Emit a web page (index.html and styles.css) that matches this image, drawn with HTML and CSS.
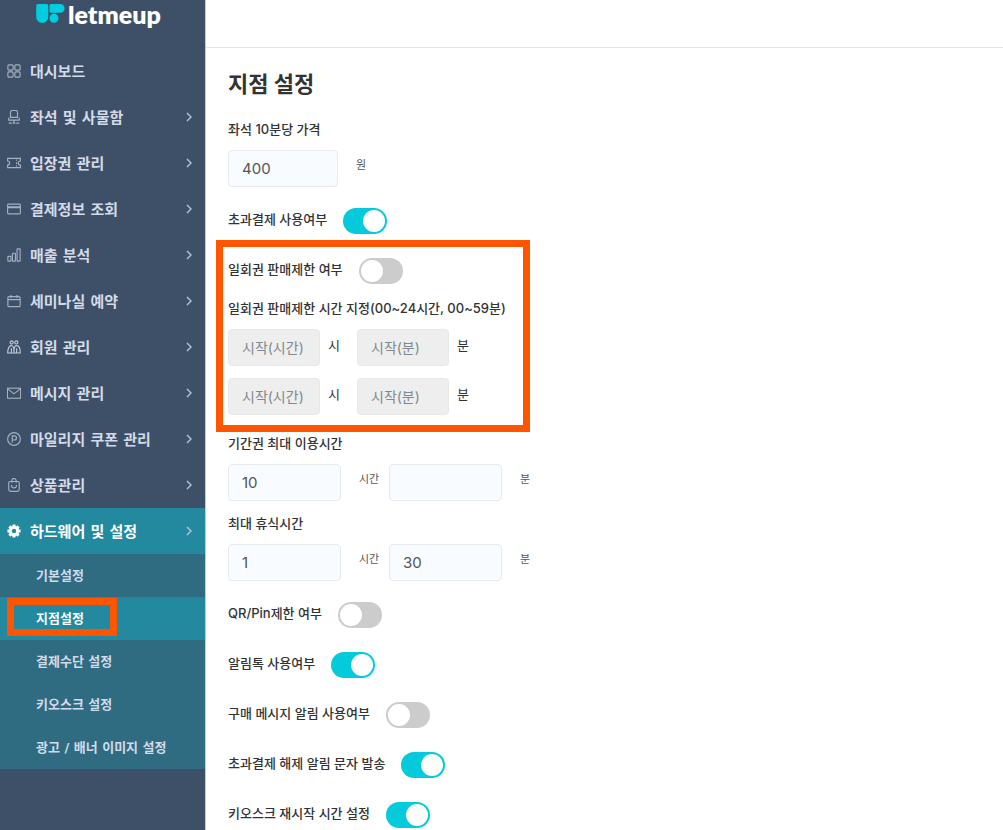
FILE: index.html
```html
<!DOCTYPE html>
<html lang="ko">
<head>
  <meta charset="UTF-8">
  <title>지점 설정</title>
  <link rel="stylesheet" href="styles.css">
</head>
<body>

<aside class="sidebar">
  <a class="logo" href="#">
    <svg width="29" height="20" viewBox="0 0 29 20" fill="#00cde0">
      <path d="M2 0h8.500a1.800 1.800 0 0 1 1.800 1.800V13a6 6 0 0 1-12.100 0V1.800A1.800 1.800 0 0 1 2 0z"/>
      <path d="M15 0h9.200a4.400 4.400 0 0 1 0 8.800H15a1.500 1.500 0 0 1-1.500-1.500V1.500A1.500 1.500 0 0 1 15 0z"/>
      <circle cx="18" cy="14.300" r="4.500"/>
    </svg>
    <span>letmeup</span>
  </a>

  <nav>
    <a class="menu" href="#">
      <svg class="icon" viewBox="0 0 16 16"><rect x="1" y="1" width="6" height="6" rx="1.200"/><rect x="9" y="1" width="6" height="6" rx="1.200"/><rect x="1" y="9" width="6" height="6" rx="1.200"/><rect x="9" y="9" width="6" height="6" rx="1.200"/></svg>
      대시보드
    </a>
    <a class="menu" href="#">
      <svg class="icon" viewBox="0 0 16 16"><path d="M4 8.500V2.500a2 2 0 0 1 2-2h4a2 2 0 0 1 2 2v6zM2 8.500v3h12v-3M2 11.500h12M8 11.500v3M2 15h3.500M6.500 15h3M10.500 15H14"/></svg>
      좌석 및 사물함
      <svg class="arrow" viewBox="0 0 8 10"><path d="M2 1l4 4-4 4"/></svg>
    </a>
    <a class="menu" href="#">
      <svg class="icon" viewBox="0 0 16 16"><path d="M.700 2.700h14.600v3a2.300 2.300 0 0 0 0 4.600v3H.700v-3a2.300 2.300 0 0 0 0-4.600zM11 4v1.500M11 7v2M11 10.500V12"/></svg>
      입장권 관리
      <svg class="arrow" viewBox="0 0 8 10"><path d="M2 1l4 4-4 4"/></svg>
    </a>
    <a class="menu" href="#">
      <svg class="icon" viewBox="0 0 16 16"><rect x=".700" y="2.500" width="14.600" height="11" rx="1"/><path d="M1 5.500h14M1 6.500h14"/></svg>
      결제정보 조회
      <svg class="arrow" viewBox="0 0 8 10"><path d="M2 1l4 4-4 4"/></svg>
    </a>
    <a class="menu" href="#">
      <svg class="icon" viewBox="0 0 16 16"><rect x="1" y="9.500" width="3.500" height="5.500" rx=".500"/><rect x="6.200" y="6" width="3.500" height="9" rx=".500"/><rect x="11.500" y="1" width="3.500" height="14" rx=".500"/></svg>
      매출 분석
      <svg class="arrow" viewBox="0 0 8 10"><path d="M2 1l4 4-4 4"/></svg>
    </a>
    <a class="menu" href="#">
      <svg class="icon" viewBox="0 0 16 16"><rect x="1" y="3" width="14" height="11.500" rx="1.500"/><path d="M1 6.500h14M4.500 1v3.500M11.500 1v3.500"/></svg>
      세미나실 예약
      <svg class="arrow" viewBox="0 0 8 10"><path d="M2 1l4 4-4 4"/></svg>
    </a>
    <a class="menu" href="#">
      <svg class="icon bright" viewBox="0 0 16 16"><circle cx="5.300" cy="2.800" r="1.800"/><circle cx="10.700" cy="2.800" r="1.800"/><path d="M.800 14.800c0-5 1.500-8.300 4.200-8.300s3 3 3 8.300c0-5.300.300-8.300 3-8.300s4.200 3.300 4.200 8.300zM5 9.500v5M11 9.500v5"/></svg>
      회원 관리
      <svg class="arrow" viewBox="0 0 8 10"><path d="M2 1l4 4-4 4"/></svg>
    </a>
    <a class="menu" href="#">
      <svg class="icon" viewBox="0 0 16 16"><rect x=".500" y="2.500" width="15" height="11.500"/><path d="M.500 3L8 9l7.500-6"/></svg>
      메시지 관리
      <svg class="arrow" viewBox="0 0 8 10"><path d="M2 1l4 4-4 4"/></svg>
    </a>
    <a class="menu" href="#">
      <svg class="icon" viewBox="0 0 16 16"><circle cx="8" cy="8" r="7.300"/><path d="M6 12V4.500h2.500a2.300 2.300 0 0 1 0 4.600H6"/></svg>
      마일리지 쿠폰 관리
      <svg class="arrow" viewBox="0 0 8 10"><path d="M2 1l4 4-4 4"/></svg>
    </a>
    <a class="menu" href="#">
      <svg class="icon" viewBox="0 0 16 16"><path d="M3.500 4h9A1.500 1.500 0 0 1 14 5.500v7a2.800 2.800 0 0 1-2.800 2.800H4.800A2.800 2.800 0 0 1 2 12.500v-7A1.500 1.500 0 0 1 3.500 4zM5.500 5.500V3a2.500 2.500 0 0 1 5 0v2.500M5.200 8v.500a2.800 2.800 0 0 0 5.600 0V8"/></svg>
      상품관리
      <svg class="arrow" viewBox="0 0 8 10"><path d="M2 1l4 4-4 4"/></svg>
    </a>
    <a class="menu active" href="#">
      <svg class="icon gear" viewBox="0 0 16 16"><circle cx="8" cy="8" r="4.200"/><path d="M8 .500v3M8 12.500v3M.500 8h3M12.500 8h3M2.700 2.700l2.100 2.100M11.200 11.200l2.100 2.100M2.700 13.300l2.100-2.100M11.200 4.800l2.100-2.100"/></svg>
      하드웨어 및 설정
      <svg class="arrow" viewBox="0 0 8 10"><path d="M2 1l4 4-4 4"/></svg>
    </a>
    <div class="submenu">
      <a href="#">기본설정</a>
      <a class="current" href="#">지점설정</a>
      <a href="#">결제수단 설정</a>
      <a href="#">키오스크 설정</a>
      <a href="#">광고 / 배너 이미지 설정</a>
    </div>
  </nav>
</aside>

<main class="page">
  <header class="topbar"></header>

  <form class="settings">
    <h1>지점 설정</h1>

    <div class="field">
      <label for="price">좌석 10분당 가격</label>
      <div class="inputs">
        <input class="text price" type="text" id="price" value="400">
        <span class="unit">원</span>
      </div>
    </div>

    <div class="switch-row first">
      <label for="overpay">초과결제 사용여부</label>
      <input class="switch" type="checkbox" id="overpay" checked>
    </div>

    <div class="limit">
      <div class="switch-row">
        <label for="limit">일회권 판매제한 여부</label>
        <input class="switch" type="checkbox" id="limit">
      </div>
      <div class="field">
        <label for="startHour">일회권 판매제한 시간 지정(00~24시간, 00~59분)</label>
        <div class="inputs">
          <input class="text time" type="text" id="startHour" placeholder="시작(시간)" disabled>
          <span class="unit dark">시</span>
          <input class="text time" type="text" aria-label="분" placeholder="시작(분)" disabled>
          <span class="unit dark">분</span>
        </div>
        <div class="inputs">
          <input class="text time" type="text" aria-label="시" placeholder="시작(시간)" disabled>
          <span class="unit dark">시</span>
          <input class="text time" type="text" aria-label="분" placeholder="시작(분)" disabled>
          <span class="unit dark">분</span>
        </div>
      </div>
    </div>

    <div class="field">
      <label for="maxHour">기간권 최대 이용시간</label>
      <div class="inputs">
        <input class="text" type="text" id="maxHour" value="10">
        <span class="unit">시간</span>
        <input class="text" type="text" aria-label="분">
        <span class="unit">분</span>
      </div>
    </div>

    <div class="field">
      <label for="restHour">최대 휴식시간</label>
      <div class="inputs">
        <input class="text" type="text" id="restHour" value="1">
        <span class="unit">시간</span>
        <input class="text" type="text" aria-label="분" value="30">
        <span class="unit">분</span>
      </div>
    </div>

    <div class="switch-row first">
      <label for="qr">QR/Pin제한 여부</label>
      <input class="switch" type="checkbox" id="qr">
    </div>
    <div class="switch-row">
      <label for="talk">알림톡 사용여부</label>
      <input class="switch" type="checkbox" id="talk" checked>
    </div>
    <div class="switch-row">
      <label for="buyMessage">구매 메시지 알림 사용여부</label>
      <input class="switch" type="checkbox" id="buyMessage">
    </div>
    <div class="switch-row">
      <label for="overpaySms">초과결제 해제 알림 문자 발송</label>
      <input class="switch" type="checkbox" id="overpaySms" checked>
    </div>
    <div class="switch-row">
      <label for="restart">키오스크 재시작 시간 설정</label>
      <input class="switch" type="checkbox" id="restart" checked>
    </div>
  </form>
</main>

</body>
</html>
```
FILE: styles.css
```css
*, *::before, *::after {
  box-sizing: border-box;
}
body {
  margin: 0;
  display: flex;
  min-height: 100vh;
  font-family: Inter, "Noto Sans CJK KR", sans-serif;
  color: #333;
  background: #fff;
}
a {
  color: inherit;
  text-decoration: none;
}

/* sidebar */
.sidebar {
  flex: none;
  width: 206px;
  background: #3d5068;
  border-right: 1px solid #c3cbdb;
  color: #d3dbe8;
  font-family: "DejaVu Sans", "Noto Sans CJK KR", sans-serif;
}
.logo {
  display: flex;
  align-items: center;
  height: 48px;
  padding: 0 0 20px 36px;
  gap: 3px;
  color: #fff;
  font: 800 25px/28px Lato, sans-serif;
}
.menu {
  display: flex;
  align-items: center;
  height: 46px;
  padding: 0 12px 1px 7px;
  font-size: 15px;
  font-weight: bold;
}
.icon {
  width: 14px;
  height: 14px;
  margin-right: 9px;
  fill: none;
  stroke: #a3b0c0;
  stroke-width: 1.3;
}
.icon.bright {
  stroke: #c3ccd8;
}
.icon.gear {
  stroke: #fff;
  stroke-width: 3.4;
}
.arrow {
  width: 8px;
  height: 10px;
  margin-left: auto;
  fill: none;
  stroke: #b9c3d0;
  stroke-width: 1.4;
}
.menu.active {
  background: #23899e;
  color: #fff;
}
.submenu {
  background: #2f6c82;
}
.submenu a {
  display: block;
  position: relative;
  height: 43px;
  padding-left: 36px;
  font-size: 13px;
  font-weight: bold;
  line-height: 43px;
}
.submenu .current {
  background: #23899e;
  color: #fff;
}
.submenu .current::after {
  content: "";
  position: absolute;
  top: 1px;
  left: 7px;
  width: 110px;
  height: 38px;
  border: 7px solid #ff5500;
}

/* content */
.page {
  flex: 1;
}
.topbar {
  height: 48px;
  border-bottom: 1px solid #dfe5ee;
}
.settings {
  padding: 21px 22px 0;
}
h1 {
  margin: 0 0 20px;
  font-size: 22px;
  line-height: 30px;
}
label {
  font-size: 13px;
  font-weight: 500;
  line-height: 20px;
}
.field {
  display: flex;
  flex-direction: column;
  margin-bottom: 12px;
}
.inputs {
  display: flex;
  margin-top: 11px;
}
.inputs + .inputs {
  margin-top: 12px;
}
.text {
  width: 113px;
  height: 37px;
  padding: 0 13px;
  border: 1px solid #e6eaee;
  border-radius: 4px;
  background: #f8fbff;
  color: #555;
  font-family: inherit;
  font-size: 15px;
}
.text.price {
  width: 110px;
}
.text.time {
  width: 92px;
  font-size: 14px;
}
.text:disabled {
  background: #eee;
  border-color: #e8e8e8;
}
.text::placeholder {
  color: #808890;
}
.unit {
  width: 48px;
  padding-left: 18px;
  font-size: 11px;
  line-height: 30px;
  color: #555;
}
.unit.dark {
  width: 37px;
  padding-left: 8px;
  font-size: 13px;
  line-height: 32px;
  color: #333;
}
.switch-row {
  display: flex;
  height: 26px;
  gap: 16px;
  margin-bottom: 24px;
}
.switch-row.first {
  margin-top: 21px;
}
.switch-row label {
  line-height: 22px;
}
.switch {
  appearance: none;
  width: 44px;
  height: 26px;
  margin: 0;
  padding: 2px;
  border-radius: 13px;
  background: #ccc;
}
.switch::before {
  content: "";
  display: block;
  width: 22px;
  height: 22px;
  border-radius: 50%;
  background: #fff;
}
.switch:checked {
  background: #04cadc;
}
.switch:checked::before {
  margin-left: auto;
}

/* one-time ticket limit */
.limit {
  position: relative;
  margin-bottom: 18px;
}
.limit .switch-row {
  margin-bottom: 14px;
}
.limit .field {
  margin-bottom: 0;
}
.limit::after {
  content: "";
  position: absolute;
  top: -18px;
  bottom: -17px;
  left: -12px;
  width: 314px;
  border: 7px solid #ff5500;
  pointer-events: none;
}
```
